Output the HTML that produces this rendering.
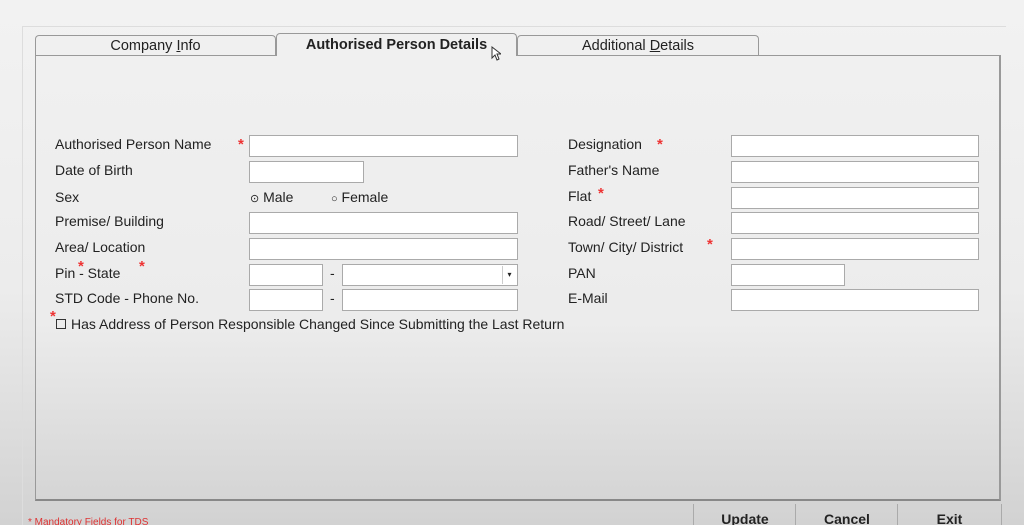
<!DOCTYPE html>
<html style="overflow:hidden;height:525px"><head><style>
html,body{margin:0;overflow:hidden}
body{width:1024px;height:525px;background:linear-gradient(#f2f2f2 0%,#ececec 55%,#d2d2d2 100%);font-family:"Liberation Sans",Arial,sans-serif;font-size:14px;color:#222;position:relative}
.a{position:absolute}
.box{position:absolute;background:#fff;border:1px solid #aaa;box-sizing:border-box;height:22px}
.lbl{position:absolute;font-size:14px;color:#222}
.st{position:absolute;color:#e33;font-size:15px;font-weight:bold}
.tab{position:absolute;top:35px;height:20px;border:1px solid #999;border-bottom:none;border-radius:4px 4px 0 0;background:#f0f0f0;text-align:center;font-size:14.5px;line-height:20px;box-sizing:border-box}
.btn{position:absolute;top:504px;height:21px;border-left:1px solid #aaa;text-align:center;font-weight:bold;font-size:14px;line-height:30px;overflow:hidden}
</style></head><body>
<div class="a" style="left:22px;top:26px;width:984px;height:499px;border-left:1px solid #ddd;border-top:1px solid #ddd;box-sizing:border-box"></div>
<div class="a" style="left:35px;top:55px;width:966px;height:446px;border:1px solid #999;border-bottom:2px solid #888;border-right:2px solid #999;box-sizing:border-box;background:linear-gradient(#f0f0f0 0%,#ececec 60%,#d5d5d5 100%)"></div>
<div class="tab" style="left:35px;width:241px">Company <u>I</u>nfo</div>
<div class="tab" style="left:276px;width:241px;top:33px;height:23px;font-weight:bold;z-index:2;line-height:22px">Authorised Person Details</div>
<div class="tab" style="left:517px;width:242px">Additional <u>D</u>etails</div>
<svg class="a" style="left:491px;top:46px;z-index:3" width="10" height="16"><path d="M1 1 L1 12 L4 9 L6 14 L8 13 L6 8 L10 8 Z" fill="#fff" stroke="#333" stroke-width="1"/></svg>

<div class="lbl" style="left:55px;top:136px">Authorised Person Name</div><div class="st" style="left:238px;top:136px">*</div><div class="box" style="left:249px;top:135px;width:269px"></div>
<div class="lbl" style="left:55px;top:162px">Date of Birth</div><div class="box" style="left:249px;top:161px;width:115px"></div>
<div class="lbl" style="left:55px;top:189px">Sex</div>
<div class="lbl" style="left:250px;top:189px"><span style="font-size:11px">⊙</span> Male</div>
<div class="lbl" style="left:331px;top:189px"><span style="font-size:11px">○</span> Female</div>
<div class="lbl" style="left:55px;top:213px">Premise/ Building</div><div class="box" style="left:249px;top:212px;width:269px"></div>
<div class="lbl" style="left:55px;top:239px">Area/ Location</div><div class="box" style="left:249px;top:238px;width:269px"></div>
<div class="lbl" style="left:55px;top:265px">Pin - State</div><div class="st" style="left:78px;top:258px">*</div><div class="st" style="left:139px;top:258px">*</div>
<div class="box" style="left:249px;top:264px;width:74px"></div><div class="lbl" style="left:330px;top:265px">-</div>
<div class="box" style="left:342px;top:264px;width:176px"><div class="a" style="right:1px;top:1px;width:13px;height:18px;border-left:1px solid #ccc;font-size:8px;text-align:center;line-height:18px">▾</div></div>
<div class="lbl" style="left:55px;top:290px">STD Code - Phone No.</div>
<div class="box" style="left:249px;top:289px;width:74px"></div><div class="lbl" style="left:330px;top:290px">-</div><div class="box" style="left:342px;top:289px;width:176px"></div>
<div class="st" style="left:50px;top:308px">*</div>
<div class="lbl" style="left:56px;top:316px"><span style="display:inline-block;width:8px;height:8px;border:1px solid #333;margin-right:5px"></span>Has Address of Person Responsible Changed Since Submitting the Last Return</div>

<div class="lbl" style="left:568px;top:136px">Designation</div><div class="st" style="left:657px;top:136px">*</div><div class="box" style="left:731px;top:135px;width:248px"></div>
<div class="lbl" style="left:568px;top:162px">Father's Name</div><div class="box" style="left:731px;top:161px;width:248px"></div>
<div class="lbl" style="left:568px;top:188px">Flat</div><div class="st" style="left:598px;top:185px">*</div><div class="box" style="left:731px;top:187px;width:248px"></div>
<div class="lbl" style="left:568px;top:213px">Road/ Street/ Lane</div><div class="box" style="left:731px;top:212px;width:248px"></div>
<div class="lbl" style="left:568px;top:239px">Town/ City/ District</div><div class="st" style="left:707px;top:236px">*</div><div class="box" style="left:731px;top:238px;width:248px"></div>
<div class="lbl" style="left:568px;top:265px">PAN</div><div class="box" style="left:731px;top:264px;width:114px"></div>
<div class="lbl" style="left:568px;top:290px">E-Mail</div><div class="box" style="left:731px;top:289px;width:248px"></div>

<div class="a" style="left:28px;top:517px;color:#d33;font-size:10px">* Mandatory Fields for TDS</div>
<div class="btn" style="left:693px;width:102px">Update</div>
<div class="btn" style="left:795px;width:102px">Cancel</div>
<div class="btn" style="left:897px;width:103px;border-right:1px solid #aaa">Exit</div>
</body></html>
